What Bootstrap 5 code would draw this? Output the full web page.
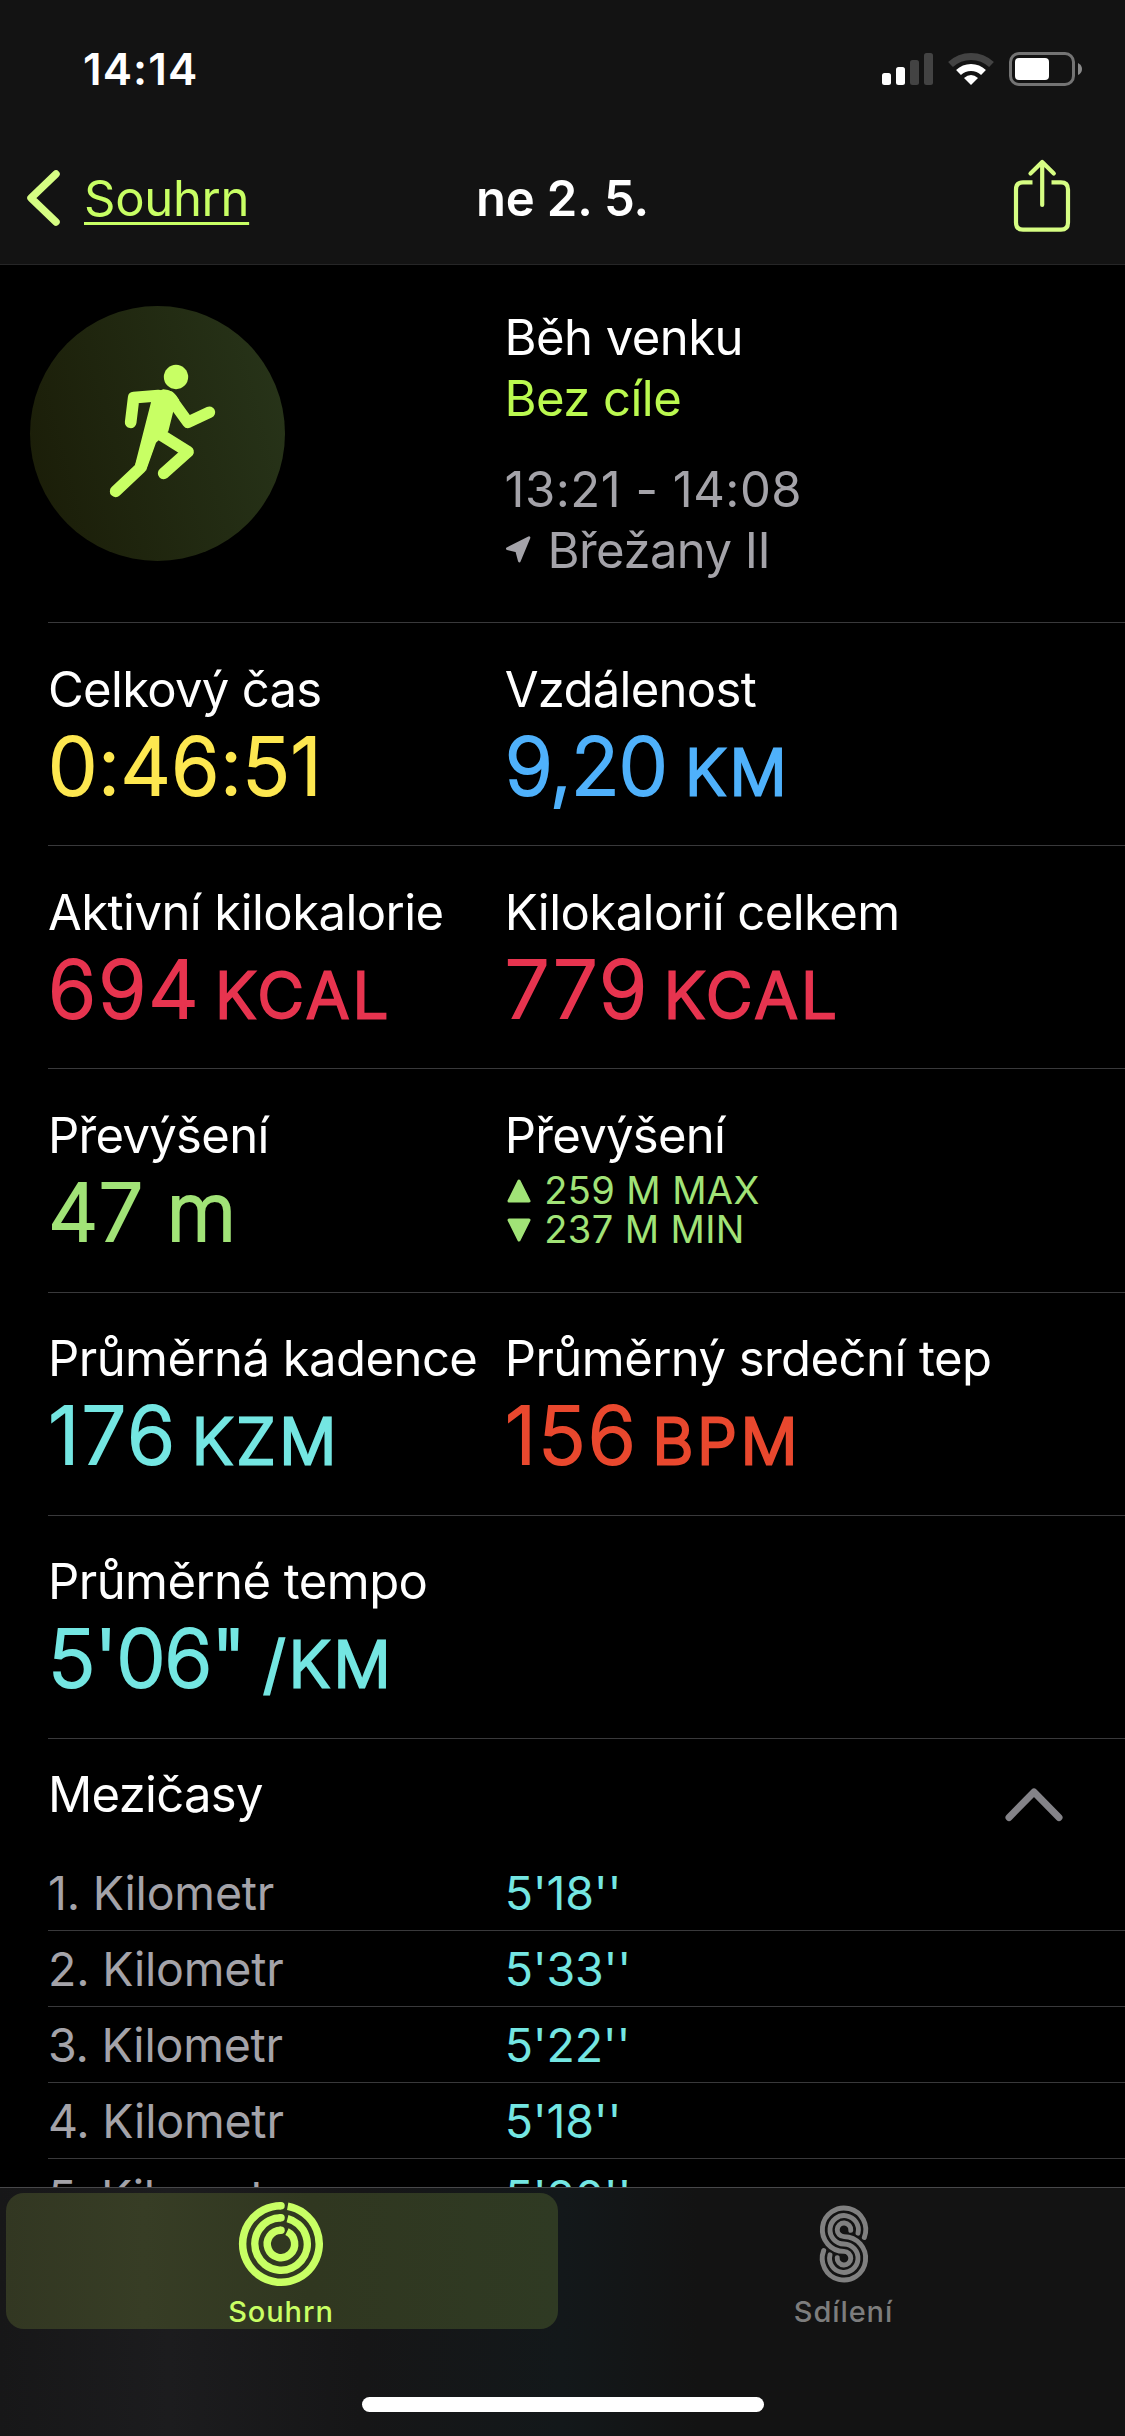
<!DOCTYPE html>
<html lang="cs" data-bs-theme="dark">
<head>
<meta charset="utf-8">
<meta name="viewport" content="width=device-width, initial-scale=1">
<title>ne 2. 5.</title>
<link href="https://cdn.jsdelivr.net/npm/bootstrap@5.3.0/dist/css/bootstrap.min.css" rel="stylesheet">
<style>
body{font-family:Inter,"Liberation Sans",sans-serif;font-size:49px;line-height:60px;letter-spacing:-.55px;background:#000;color:#fff;font-kerning:normal}
svg{display:block;flex:none}
.screen{width:1125px;height:2436px}
.top-area{height:265px;background:#131313;border-bottom:1px solid #262627}
.status-row{height:110px;padding:42px 43px 0 83px}
.clock{font-weight:600;font-size:44px;line-height:54px;letter-spacing:1.1px}
.status-icons{margin-top:9px}
.nav-row{height:154px;padding:41px 53px 0 26px}
.back-icon{margin-top:17px}
.back{color:#c8ff64;letter-spacing:-.3px;text-decoration:underline;text-decoration-thickness:3px;text-underline-offset:6px;text-decoration-skip-ink:none;margin:18px 0 0 23px}
.heading{font-weight:600;letter-spacing:-.1px;margin-top:18px}
.share-icon{margin-top:7px}
.side-start{width:300px}
.side-end{width:273px}
.content-area{flex:1 1 0;min-height:0}
.hero{height:357px;padding:41px 0 0 30px}
.disc{width:255px;height:255px;background:linear-gradient(75deg,#1a1c07,#28351a)}
.hero-info{margin-left:219.5px;padding-top:1px;line-height:61px}
.hero-time{margin-top:30px;letter-spacing:.5px}
.arrow-icon{margin:15px 17px 0 0}
.lime{color:#baf94f}
.dim{color:#a4a3a9}
.line-row{margin-left:48px;border-top:1px solid #39393b}
.metric{height:223.2px;padding-top:36.5px}
.col-a{width:456.7px;flex:none;white-space:nowrap}
.tight{letter-spacing:-.7px}
.figure{font-size:80px;line-height:80px;font-weight:300;-webkit-text-stroke:2.2px currentColor;stroke-linejoin:round;letter-spacing:2px;margin:6px 0 0 0;white-space:pre}
.figure-plain{letter-spacing:.3px}
.figure-tight{letter-spacing:-1.300px}
.unit{font-size:63.500px;line-height:60px;letter-spacing:3.500px;margin-left:-10px;-webkit-text-stroke-width:2.800px}
.figure-tight .unit{margin-left:-3px}
.yellow{color:#fde750}.blue{color:#4fb1fb}.pink{color:#e7344f}.green{color:#a1e377}.teal{color:#74e6e2}.red{color:#e9482e}
.elev{font-size:38px;line-height:39px;letter-spacing:.4px;margin-top:5.5px;padding-left:2.5px}
.elev svg{margin-right:13px}
.splits-head{height:117px;padding:26.5px 62px 0 0}
.chevron{margin-top:21px}
.split{margin-left:48px;height:76px;border-bottom:1px solid #39393b;font-size:46.5px;line-height:75px;padding-top:1px;letter-spacing:-.2px}
.split .teal{letter-spacing:-.2px}
.tabs{height:249px;border-top:1px solid #48484a;background:linear-gradient(90deg,#171718 0,#1c1c1e 15%,#161617 32%,#13181a 50%,#131313 62%,#131313 100%)}
.tab{width:50%;padding:4.5px 4.5px 0 6px}
.tab-pill{height:136px;border-radius:18px;padding:8px 2px 0 0;font-size:29px;line-height:36px;font-weight:500;letter-spacing:.9px}
.tab-pill svg{margin-bottom:7px}
.tab-on{background:linear-gradient(90deg,#323722,#373d25 25%,#303720 55%,#2f3a23);color:#c8ff64}
.tab-off{color:#7d7d7d}
.home-bar{width:402px;height:15px;border-radius:8px;background:#fff;margin:68px auto 0}
</style>
</head>
<body>
<div class="screen d-flex flex-column overflow-hidden">
  <header class="top-area">
    <div class="status-row d-flex justify-content-between align-items-start">
      <div class="clock">14:14</div>
      <svg class="status-icons" width="200" height="36" viewBox="882 51 200 36">
        <g fill="#fff"><rect x="882" y="73" width="9" height="12" rx="2.5"/><rect x="896" y="67" width="9" height="18" rx="2.5"/></g>
        <g fill="#434343"><rect x="910" y="60" width="9" height="25" rx="2.5"/><rect x="924" y="53" width="9" height="32" rx="2.5"/></g>
        <g fill="none" stroke-width="7"><path d="M950.500 64.500A30 30 0 0 1 991.500 64.500" stroke="#434343"/><path d="M958.500 72.500A18 18 0 0 1 983.500 72.500" stroke="#fff"/></g>
        <path d="M964 78Q971 72 978 78L971 85Z" fill="#fff"/>
        <rect x="1010.500" y="53.500" width="63" height="31" rx="8.500" fill="none" stroke="#747474" stroke-width="3"/>
        <rect x="1015" y="58" width="34" height="22" rx="4" fill="#fff"/>
        <path d="M1078 63Q1082 65 1082 69T1078 75Z" fill="#8a8a8a"/>
      </svg>
    </div>
    <nav class="nav-row d-flex justify-content-between align-items-start">
      <div class="side-start d-flex">
        <svg class="back-icon" width="35" height="60" viewBox="26 168 35 60"><path d="M56 174L31 198L56 222" fill="none" stroke="#d6fd83" stroke-width="7.500" stroke-linecap="round" stroke-linejoin="round"/></svg>
        <a class="back" href="#">Souhrn</a>
      </div>
      <div class="heading">ne 2. 5.</div>
      <div class="side-end d-flex justify-content-end">
        <svg class="share-icon" width="60" height="76" viewBox="1012 158 60 76"><g fill="none" stroke="#d6fd83" stroke-width="4.200" stroke-linecap="round" stroke-linejoin="round"><path d="M1032.500 182.300H1023Q1016 182.300 1016 189.500V222.500Q1016 229.700 1023 229.700H1061Q1068 229.700 1068 222.500V189.500Q1068 182.300 1061 182.300H1051.500" stroke-linecap="butt"/><path d="M1042.200 205V162.500M1030.500 173.500L1042.200 162L1053.800 173.500"/></g></svg>
      </div>
    </nav>
  </header>

  <main class="content-area overflow-hidden">
    <section class="hero d-flex">
      <div class="disc rounded-circle d-flex flex-shrink-0">
        <svg width="255" height="255" viewBox="30 306 255 255"><g transform="translate(90 350) scale(.33333)"><g fill="none" stroke="#c8ff64" stroke-width="35" stroke-linecap="round" stroke-linejoin="round"><path d="M122 217L131 143L205 137"/><path d="M238 140L294 217L358 187"/><path d="M77 424L151 354L180 270"/><path d="M205 250L294 305L221 370"/></g><path d="M187 130L220 118Q250 118 268 150L250 184L235 244L198 278L168 362L135 345L183 157Z" fill="#c8ff64"/><circle cx="258" cy="81" r="36.500" fill="#c8ff64"/></g></svg>
      </div>
      <div class="hero-info">
        <div>Běh venku</div>
        <div class="lime">Bez cíle</div>
        <div class="dim hero-time">13:21 - 14:08</div>
        <div class="dim d-flex">
          <svg class="arrow-icon" width="26" height="30" viewBox="505 538 26 30"><g transform="translate(490 525) scale(.33333)"><path d="M117 47L88 117L80 87L52 80Z" fill="#a4a3a9" stroke="#a4a3a9" stroke-width="8" stroke-linejoin="round"/></g></svg>
          <span>Břežany II</span>
        </div>
      </div>
    </section>

    <section class="metric line-row d-flex">
      <div class="col-a"><div class="tight">Celkový čas</div><div class="figure figure-plain yellow">0:46:51</div></div>
      <div><div class="tight">Vzdálenost</div><div class="figure figure-tight blue">9,20 <span class="unit">KM</span></div></div>
    </section>
    <section class="metric line-row d-flex">
      <div class="col-a"><div>Aktivní kilokalorie</div><div class="figure pink">694 <span class="unit">KCAL</span></div></div>
      <div><div>Kilokalorií celkem</div><div class="figure pink">779 <span class="unit">KCAL</span></div></div>
    </section>
    <section class="metric line-row d-flex">
      <div class="col-a"><div class="tight">Převýšení</div><div class="figure figure-plain green">47 m</div></div>
      <div><div class="tight">Převýšení</div>
        <div class="elev green">
          <div class="d-flex align-items-center"><svg width="24" height="26" viewBox="0 0 24 26"><path d="M12 3L22 23H2Z" fill="#a1e377" stroke="#a1e377" stroke-width="3" stroke-linejoin="round"/></svg>259 M MAX</div>
          <div class="d-flex align-items-center"><svg width="24" height="26" viewBox="0 0 24 26"><path d="M12 23L22 3H2Z" fill="#a1e377" stroke="#a1e377" stroke-width="3" stroke-linejoin="round"/></svg>237 M MIN</div>
        </div>
      </div>
    </section>
    <section class="metric line-row d-flex">
      <div class="col-a"><div>Průměrná kadence</div><div class="figure teal">176 <span class="unit">KZM</span></div></div>
      <div><div>Průměrný srdeční tep</div><div class="figure red">156 <span class="unit">BPM</span></div></div>
    </section>
    <section class="metric line-row d-flex">
      <div class="col-a"><div class="tempo-name">Průměrné tempo</div><div class="figure figure-tight teal">5'06" <span class="unit">/KM</span></div></div>
    </section>

    <section>
      <div class="splits-head line-row d-flex justify-content-between">
        <div class="tight">Mezičasy</div>
        <svg class="chevron" width="58" height="36" viewBox="1005 1786 58 36"><path d="M1009 1817.500L1034 1792L1059 1817.500" fill="none" stroke="#848388" stroke-width="7" stroke-linecap="round" stroke-linejoin="round"/></svg>
      </div>
      <div class="split d-flex"><div class="col-a dim">1. Kilometr</div><div class="teal">5'18''</div></div>
      <div class="split d-flex"><div class="col-a dim">2. Kilometr</div><div class="teal">5'33''</div></div>
      <div class="split d-flex"><div class="col-a dim">3. Kilometr</div><div class="teal">5'22''</div></div>
      <div class="split d-flex"><div class="col-a dim">4. Kilometr</div><div class="teal">5'18''</div></div>
      <div class="split d-flex"><div class="col-a dim">5. Kilometr</div><div class="teal">5'20''</div></div>
    </section>
  </main>

  <footer class="tabs">
    <div class="d-flex">
      <div class="tab"><div class="tab-pill tab-on d-flex flex-column align-items-center">
        <svg width="86" height="86" viewBox="-43 -43 86 86"><g fill="none" stroke="#c8ff64" stroke-width="7.500"><path d="M6.700 -37.700A38.300 38.300 0 1 1 0 -38.300"/><path d="M6.500 -25.400A26.200 26.200 0 1 1 0 -26.200"/><path d="M6 -12.300A13.700 13.700 0 1 1 0 -13.700"/></g><g fill="#c8ff64"><circle cy="-38.300" r="3.750"/><circle cy="-26.200" r="3.750"/><circle cy="-13.700" r="3.750"/></g></svg>
        <span>Souhrn</span></div></div>
      <div class="tab"><div class="tab-pill tab-off d-flex flex-column align-items-center">
        <svg width="86" height="86" viewBox="-43 -43 86 86"><g fill="none" stroke="#808080" stroke-width="4.900" stroke-linecap="round"><path d="M20.300 -6.500A21.700 21.700 0 1 0 0 7.400A6.800 6.800 0 1 1 -6.800 13.600"/><path d="M14 -10.800A14.200 14.200 0 1 0 0 0A14.200 14.200 0 1 1 -14 10.800"/><path d="M-20.300 6.500A21.700 21.700 0 1 0 0 -7.400A6.800 6.800 0 1 1 6.800 -13.600"/></g></svg>
        <span>Sdílení</span></div></div>
    </div>
    <div class="home-bar"></div>
  </footer>
</div>
<script src="https://cdn.jsdelivr.net/npm/bootstrap@5.3.0/dist/js/bootstrap.bundle.min.js"></script>
</body>
</html>
